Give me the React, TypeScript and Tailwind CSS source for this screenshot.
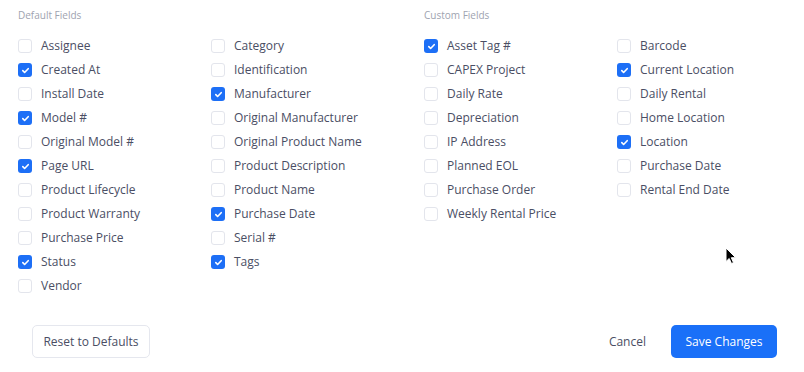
import React, { useState } from 'react';

const defaultCols = [
	[
		['Assignee', false],
		['Created At', true],
		['Install Date', false],
		['Model #', true],
		['Original Model #', false],
		['Page URL', true],
		['Product Lifecycle', false],
		['Product Warranty', false],
		['Purchase Price', false],
		['Status', true],
		['Vendor', false],
	],
	[
		['Category', false],
		['Identification', false],
		['Manufacturer', true],
		['Original Manufacturer', false],
		['Original Product Name', false],
		['Product Description', false],
		['Product Name', false],
		['Purchase Date', true],
		['Serial #', false],
		['Tags', true],
	],
] as [string, boolean][][];

const customCols = [
	[
		['Asset Tag #', true],
		['CAPEX Project', false],
		['Daily Rate', false],
		['Depreciation', false],
		['IP Address', false],
		['Planned EOL', false],
		['Purchase Order', false],
		['Weekly Rental Price', false],
	],
	[
		['Barcode', false],
		['Current Location', true],
		['Daily Rental', false],
		['Home Location', false],
		['Location', true],
		['Purchase Date', false],
		['Rental End Date', false],
	],
] as [string, boolean][][];

function Check({ label, initial }: { label: string; initial: boolean }) {
	const [on, setOn] = useState(initial);
	return (
		<button onClick={() => setOn(!on)} className="flex items-center gap-[9px] h-6 text-left">
			{on ? (
				<span className="w-[14px] h-[14px] rounded-[3px] bg-[#1d6ff6] flex items-center justify-center">
					<svg width="9" height="9" viewBox="0 0 10 10" fill="none">
						<path d="M2 5.2l2 2 4-4.2" stroke="white" strokeWidth="1.8" strokeLinecap="round" strokeLinejoin="round" />
					</svg>
				</span>
			) : (
				<span className="w-[14px] h-[14px] rounded-[3px] border border-[#e3e5ec] bg-white" />
			)}
			<span className="text-[12px] text-[#4a4e64]">{label}</span>
		</button>
	);
}

function Section({ title, cols }: { title: string; cols: [string, boolean][][] }) {
	return (
		<div>
			<div className="text-[10px] text-[#9ea3b0] leading-none h-[34px] pt-[10px]">{title}</div>
			<div className="grid grid-cols-[193px_193px]">
				{cols.map((col, i) => (
					<div key={i} className="flex flex-col">
						{col.map(([label, on]) => (
							<Check key={label} label={label} initial={on} />
						))}
					</div>
				))}
			</div>
		</div>
	);
}

export default function App() {
	return (
		<div className="relative w-[804px] h-[372px] bg-white font-['Open_Sans',sans-serif]">
			<div className="flex h-[304px]">
				<div className="w-[404px] pl-[18px]">
					<Section title="Default Fields" cols={defaultCols} />
				</div>
				<div className="w-px h-[296px] mt-[6px] bg-[#ebecf0]" />
				<div className="pl-[20px]">
					<Section title="Custom Fields" cols={customCols} />
				</div>
			</div>
			<div className="flex items-center px-[32px] mt-[21px]">
				<button className="h-[33px] w-[118px] rounded-[5px] border border-[#e5e7ee] text-[12px] text-[#4a4e64]">
					Reset to Defaults
				</button>
				<button className="ml-auto text-[12px] text-[#4a4e64] mr-[25px]">Cancel</button>
				<button className="h-[33px] w-[106px] -mr-[5px] rounded-[5px] bg-[#1a70f8] text-white text-[12px]">
					Save Changes
				</button>
			</div>
			<svg className="absolute left-[725px] top-[247px]" width="12" height="18" viewBox="0 0 12 18">
				<path d="M1 1v13.5l3.2-3 2.3 5 2-0.9-2.2-4.9h4.4z" fill="black" stroke="white" strokeWidth="1" />
			</svg>
		</div>
	);
}
